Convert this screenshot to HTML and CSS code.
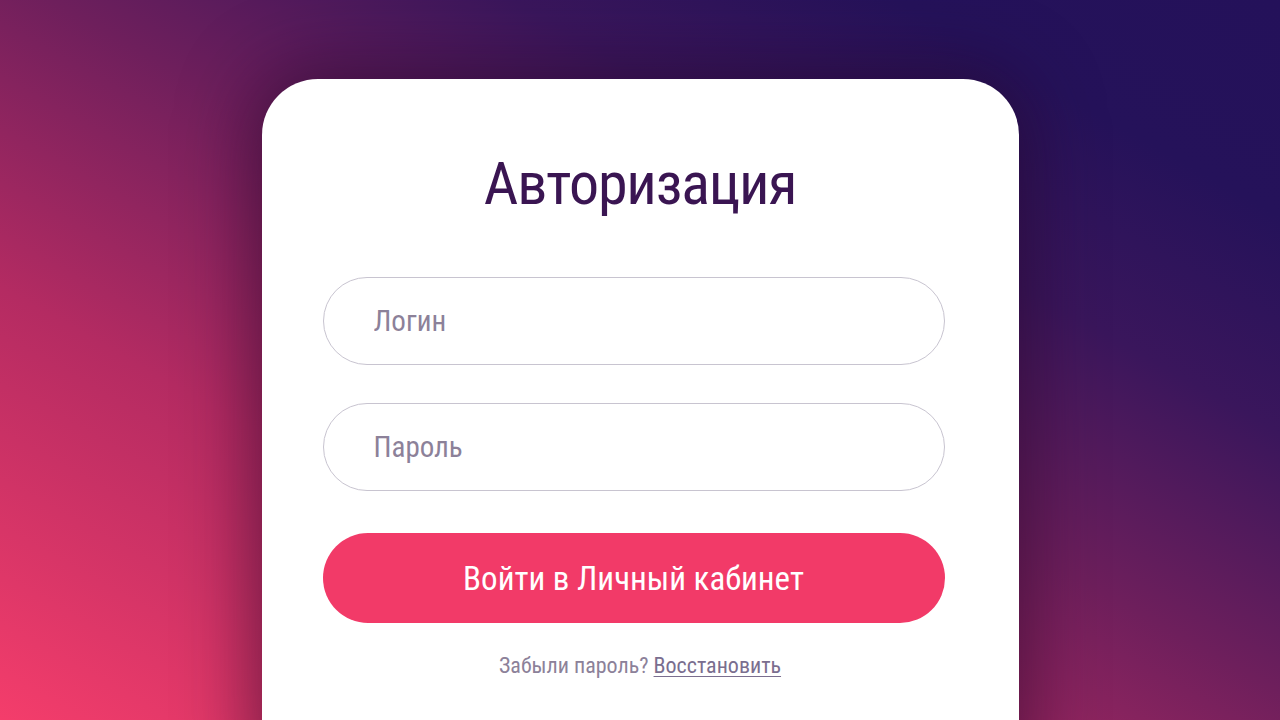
FILE: index.html
```html
<!DOCTYPE html>
<html lang="ru">
<head>
<meta charset="utf-8">
<title>Авторизация</title>
<link rel="stylesheet" href="styles.css">
</head>
<body>
<main class="page">
  <section class="card">
    <h1 class="title">Авторизация</h1>
    <form class="form">
      <input class="field" type="text" placeholder="Логин">
      <input class="field field-pass" type="password" placeholder="Пароль">
      <button class="submit" type="button">Войти в Личный кабинет</button>
    </form>
    <p class="forgot">Забыли пароль? <a href="#" class="restore">Восстановить</a></p>
  </section>
</main>
</body>
</html>
```
FILE: styles.css
```css
html, body {
  margin: 0;
  padding: 0;
  height: 720px;
  overflow: hidden;
}
body {
  font-family: "Roboto Condensed", Roboto, "Liberation Sans", sans-serif;
  background: linear-gradient(to top right, #f43d6b 0%, #b42b62 30%, #6e1f5c 52%, #3a165c 70%, #25125a 85%, #24115a 100%);
}
.page {
  display: flex;
  justify-content: center;
  padding-top: 79px;
  height: 720px;
  box-sizing: border-box;
}
.card {
  width: 757px;
  height: 720px;
  flex: none;
  background: #fff;
  border-radius: 56px;
  box-shadow: 0 0 70px 10px rgba(35, 6, 40, 0.55);
  display: flex;
  flex-direction: column;
}
.title {
  margin: 70px 0 0;
  text-align: center;
  font-weight: 400;
  font-size: 60px;
  line-height: 70px;
  letter-spacing: -1.2px;
  color: #3a1552;
}
.form {
  margin: 58px 74px 0 61px;
  display: flex;
  flex-direction: column;
}
.field {
  height: 88px;
  box-sizing: border-box;
  border: 1px solid #c8c4d0;
  border-radius: 44px;
  padding: 0 0 0 50px;
  font-family: inherit;
  font-size: 29px;
  color: #3a1552;
  outline: none;
  background: #fff;
}
.field::placeholder {
  color: #8c8199;
}
.field-pass {
  margin-top: 38px;
}
.submit {
  margin-top: 42px;
  height: 90px;
  border: none;
  border-radius: 45px;
  background: #f23a68;
  color: #fff;
  font-family: inherit;
  font-size: 33px;
  cursor: pointer;
}
.forgot {
  margin: 30px 0 0;
  text-align: center;
  font-size: 22px;
  line-height: 26px;
  color: #8c8199;
}
.restore {
  color: #7a6e8f;
  text-decoration: underline;
  text-decoration-thickness: 1px;
  text-underline-offset: 3px;
}
```
